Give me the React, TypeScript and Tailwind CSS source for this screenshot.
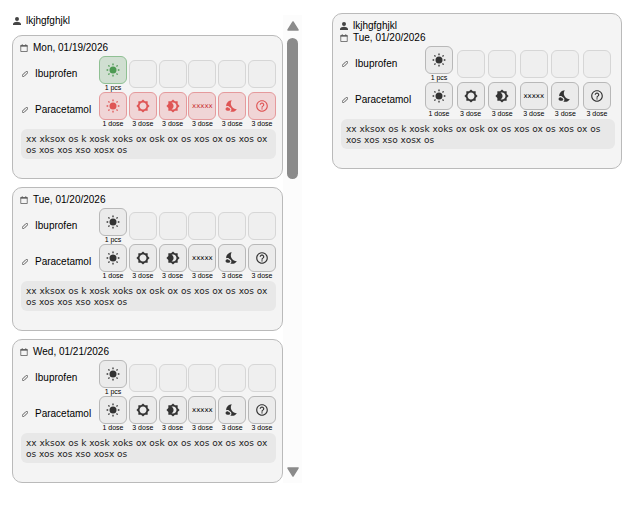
import type { ComponentType } from "react";
import { MdBrightness4, MdBrightness5, MdHelpOutline, MdNightsStay } from "react-icons/md";

type Tone = "plain" | "taken" | "missed";
type IconProps = { className?: string };
type Icon = ComponentType<IconProps>;
type Slot = { label: string; amount: string; icon?: Icon };
type Medicine = { name: string; tone: Tone; slots: (Slot | null)[] };

function SunIcon({ className }: IconProps) {
  return (
    <svg viewBox="0 0 14 14" className={className} fill="none" stroke="currentColor" strokeWidth="1.3">
      <circle cx="7" cy="7" r="3.5" fill="currentColor" stroke="none" />
      <path d="M7 .6v1.6M7 11.8v1.6M.6 7h1.6M11.8 7h1.6M2.4 2.4l1.1 1.1M10.5 10.5l1.1 1.1M11.6 2.4l-1.1 1.1M3.5 10.5l-1.1 1.1" />
    </svg>
  );
}

function PersonIcon({ className }: IconProps) {
  return (
    <svg viewBox="4 4 16 16" className={className} fill="currentColor">
      <path d="M12 12a4 4 0 1 0 0-8 4 4 0 0 0 0 8zm0 1.6c-2.7 0-8 1.4-8 4.2V20h16v-2.2c0-2.8-5.3-4.2-8-4.2z" />
    </svg>
  );
}

function CalendarIcon({ className }: IconProps) {
  return (
    <svg viewBox="0 0 16 16" className={className} fill="none" stroke="currentColor" strokeWidth="1.5">
      <path d="M1.5 3h13v12h-13z" />
      <path d="M1 4h14" strokeWidth="2.5" />
      <path d="M4.5 .5V3M11.5 .5V3" strokeWidth="1.8" />
    </svg>
  );
}

function PillIcon({ className }: IconProps) {
  return (
    <svg viewBox="0 0 16 16" className={className} fill="none" stroke="currentColor" strokeWidth="2.2">
      <rect x="-1" y="5.2" width="18" height="5.6" rx="2.8" transform="rotate(-45 8 8)" />
    </svg>
  );
}

const patient = "lkjhgfghjkl";
const note = "xx xksox os k xosk xoks ox osk ox os xos ox os xos ox os xos xos xso xosx os";

const ibuprofenSlots: (Slot | null)[] = [
  { label: "Morning", amount: "1 pcs", icon: SunIcon },
  null,
  null,
  null,
  null,
  null
];

const paracetamolSlots: Slot[] = [
  { label: "Morning", amount: "1 dose", icon: SunIcon },
  { label: "Noon", amount: "3 dose", icon: MdBrightness5 },
  { label: "Evening", amount: "3 dose", icon: MdBrightness4 },
  { label: "xxxxx", amount: "3 dose" },
  { label: "Night", amount: "3 dose", icon: MdNightsStay },
  { label: "As needed", amount: "3 dose", icon: MdHelpOutline }
];

function medicines(first: Tone, second: Tone): Medicine[] {
  return [
    { name: "Ibuprofen", tone: first, slots: ibuprofenSlots },
    { name: "Paracetamol", tone: second, slots: paracetamolSlots }
  ];
}

const days = [
  { date: "Mon, 01/19/2026", items: medicines("taken", "missed") },
  { date: "Tue, 01/20/2026", items: medicines("plain", "plain") },
  { date: "Wed, 01/21/2026", items: medicines("plain", "plain") }
];

const tones: Record<Tone, string> = {
  plain: "border-[#b8b8b8] bg-[#ebebeb] text-[#333]",
  taken: "border-[#8fc093] bg-[#d0dfd1] text-[#4c9a52]",
  missed: "border-[#e59a9c] bg-[#f0d5d6] text-[#df5555]"
};

const labelTones: Record<Tone, string> = {
  plain: "text-black",
  taken: "text-[#2f7d36]",
  missed: "text-[#c93030]"
};

function DoseTile({ slot, tone }: { slot: Slot | null; tone: Tone }) {
  if (!slot) {
    return <div className="size-7 rounded-md border border-[#d6d6d6] bg-[#efefef]" />;
  }
  const SlotIcon = slot.icon;
  return (
    <div className="flex w-7 flex-col items-center">
      <button
        type="button"
        aria-label={slot.label}
        className={`flex size-7 items-center justify-center rounded-md border ${tones[tone]}`}
      >
        {SlotIcon ? (
          <SlotIcon className="size-3.5" />
        ) : (
          <span className={`font-['DejaVu_Sans',sans-serif] text-[7px] ${labelTones[tone]}`}>{slot.label}</span>
        )}
      </button>
      <span className="text-[7px] leading-[8px] whitespace-nowrap text-black">{slot.amount}</span>
    </div>
  );
}

function MedicineRow({ medicine }: { medicine: Medicine }) {
  return (
    <div className="flex items-center">
      <PillIcon className="mr-[7px] ml-[3px] size-1.5 shrink-0 text-[#444]" />
      <span className="w-16 shrink-0 text-[10px] leading-3">{medicine.name}</span>
      <div className="ml-auto flex max-w-[186px] flex-1 items-center justify-between">
        {medicine.slots.map((slot, i) => (
          <DoseTile key={i} slot={slot} tone={medicine.tone} />
        ))}
      </div>
    </div>
  );
}

function DayCard({ date, items, person }: { date: string; items: Medicine[]; person?: string }) {
  return (
    <article className="rounded-[10px] border border-[#bababa] bg-[#f4f4f4] px-1.5 pt-1.5 pb-[19px]">
      {person && (
        <div className="flex items-center gap-[5px] pl-px text-[10px] leading-3">
          <PersonIcon className="size-2 text-[#444]" />
          <span>{person}</span>
        </div>
      )}
      <div className="flex items-center gap-[5px] pl-px text-[10px] leading-3">
        <CalendarIcon className="size-2 text-[#555]" />
        <span>{date}</span>
      </div>
      <div className={`flex flex-col pt-0.5 ${person ? "pr-1" : ""}`}>
        {items.map((medicine) => (
          <MedicineRow key={medicine.name} medicine={medicine} />
        ))}
      </div>
      <p className="mt-px ml-0.5 rounded-md bg-[#e8e8e8] px-[5px] pt-[5px] pb-[3px] font-['DejaVu_Sans',sans-serif] text-[9px] leading-[11px] text-[#222]">
        {note}
      </p>
    </article>
  );
}

function ScrollRail() {
  return (
    <div className="mt-[15px] flex w-[19px] flex-col items-center bg-[#fcfcfc] py-1.5">
      <button type="button" aria-label="Scroll up" className="text-[#8b8b8b]">
        <svg viewBox="0 0 12 10" className="h-2.5 w-3">
          <path d="M6 1 11 9H1Z" fill="currentColor" stroke="currentColor" strokeWidth="1.5" strokeLinejoin="round" />
        </svg>
      </button>
      <div className="my-[7px] w-[11px] flex-1">
        <div className="h-1/3 rounded-full bg-[#8b8b8b]" />
      </div>
      <button type="button" aria-label="Scroll down" className="text-[#8b8b8b]">
        <svg viewBox="0 0 12 10" className="h-2.5 w-3">
          <path d="M6 9 11 1H1Z" fill="currentColor" stroke="currentColor" strokeWidth="1.5" strokeLinejoin="round" />
        </svg>
      </button>
    </div>
  );
}

export default function App() {
  return (
    <main className="grid min-h-screen grid-cols-[302fr_290fr] items-start gap-[30px] bg-white font-['Liberation_Sans',Arial,sans-serif] text-black">
      <section className="flex min-w-0 items-stretch pl-3">
        <div className="min-w-0 flex-1 pt-[15px]">
          <div className="flex items-center gap-[5px] pb-2 pl-px text-[10px] leading-3">
            <PersonIcon className="size-2 text-[#444]" />
            <span>{patient}</span>
          </div>
          <div className="flex flex-col gap-2">
            {days.map((day) => (
              <DayCard key={day.date} {...day} />
            ))}
          </div>
        </div>
        <ScrollRail />
      </section>
      <section className="min-w-0 pt-[13px]">
        <DayCard date="Tue, 01/20/2026" items={medicines("plain", "plain")} person={patient} />
      </section>
    </main>
  );
}
